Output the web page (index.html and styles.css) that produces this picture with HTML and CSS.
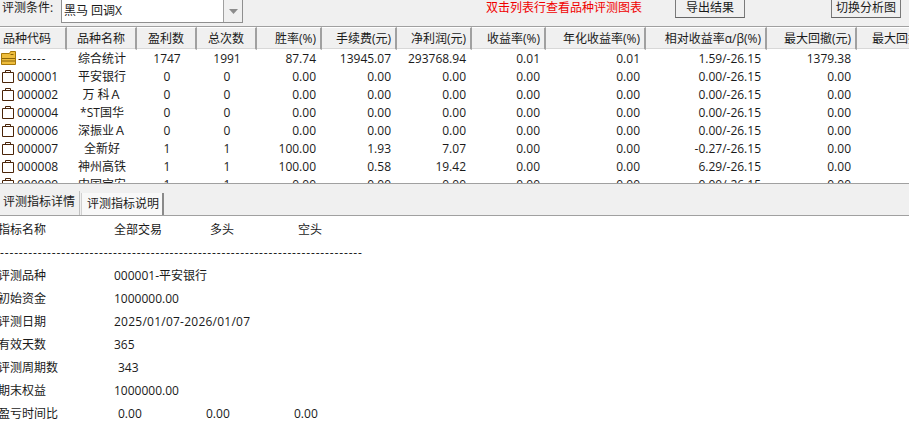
FILE: index.html
```html
<!DOCTYPE html>
<html lang="zh-CN">
<head>
<meta charset="utf-8">
<title>评测</title>
<link rel="stylesheet" href="styles.css">
</head>
<body>
<div class="app">
  <div class="toolbar">
    <span class="cond-label">评测条件:</span>
    <div class="combo"><span class="combo-text">黑马 回调X</span><span class="combo-btn"><svg width="9" height="5" viewBox="0 0 9 5"><path d="M0 0h9L4.500 5z" fill="#8c8c8c"/></svg></span></div>
    <span class="hint">双击列表行查看品种评测图表</span>
    <button class="btn btn-export">导出结果</button>
    <button class="btn btn-switch">切换分析图</button>
  </div>
  <div class="grid-wrap">
    <table class="grid">
      <colgroup>
        <col class="c1"><col class="c2"><col class="c3"><col class="c4"><col class="c5"><col class="c6"><col class="c7"><col class="c8"><col class="c9"><col class="c10"><col class="c11"><col class="c12">
      </colgroup>
      <thead>
        <tr>
          <th class="l">品种代码</th><th class="ctr">品种名称</th><th class="ctr">盈利数</th><th class="ctr">总次数</th><th>胜率(%)</th><th>手续费(元)</th><th>净利润(元)</th><th>收益率(%)</th><th>年化收益率(%)</th><th>相对收益率α/β(%)</th><th>最大回撤(元)</th><th class="last">最大回撤(%)</th>
        </tr>
      </thead>
      <tbody>
        <tr><td class="code"><svg class="ico" width="15" height="15" viewBox="0 0 15 15"><path d="M.5 2.500h8l1-2h5v13H.5z" fill="#eebd3c" stroke="#a87808"/><path d="M1 7.500h13M1 10h13M9.500 3.500h3" stroke="#8a6408" fill="none"/></svg><span class="dashes">------</span></td><td class="ctr">综合统计</td><td class="ctr">1747</td><td class="ctr">1991</td><td>87.74</td><td>13945.07</td><td>293768.94</td><td>0.01</td><td>0.01</td><td>1.59/-26.15</td><td>1379.38</td><td></td></tr>
        <tr><td class="code"><svg class="ico" width="15" height="15" viewBox="0 0 15 15"><path d="M1.500 3.500h11v10h-11zM4.500 3.500v-2h5v2" fill="none" stroke="#4a2408"/></svg>000001</td><td class="ctr">平安银行</td><td class="ctr">0</td><td class="ctr">0</td><td>0.00</td><td>0.00</td><td>0.00</td><td>0.00</td><td>0.00</td><td>0.00/-26.15</td><td>0.00</td><td></td></tr>
        <tr><td class="code"><svg class="ico" width="15" height="15" viewBox="0 0 15 15"><path d="M1.500 3.500h11v10h-11zM4.500 3.500v-2h5v2" fill="none" stroke="#4a2408"/></svg>000002</td><td class="ctr">万 科Ａ</td><td class="ctr">0</td><td class="ctr">0</td><td>0.00</td><td>0.00</td><td>0.00</td><td>0.00</td><td>0.00</td><td>0.00/-26.15</td><td>0.00</td><td></td></tr>
        <tr><td class="code"><svg class="ico" width="15" height="15" viewBox="0 0 15 15"><path d="M1.500 3.500h11v10h-11zM4.500 3.500v-2h5v2" fill="none" stroke="#4a2408"/></svg>000004</td><td class="ctr">*ST国华</td><td class="ctr">0</td><td class="ctr">0</td><td>0.00</td><td>0.00</td><td>0.00</td><td>0.00</td><td>0.00</td><td>0.00/-26.15</td><td>0.00</td><td></td></tr>
        <tr><td class="code"><svg class="ico" width="15" height="15" viewBox="0 0 15 15"><path d="M1.500 3.500h11v10h-11zM4.500 3.500v-2h5v2" fill="none" stroke="#4a2408"/></svg>000006</td><td class="ctr">深振业Ａ</td><td class="ctr">0</td><td class="ctr">0</td><td>0.00</td><td>0.00</td><td>0.00</td><td>0.00</td><td>0.00</td><td>0.00/-26.15</td><td>0.00</td><td></td></tr>
        <tr><td class="code"><svg class="ico" width="15" height="15" viewBox="0 0 15 15"><path d="M1.500 3.500h11v10h-11zM4.500 3.500v-2h5v2" fill="none" stroke="#4a2408"/></svg>000007</td><td class="ctr">全新好</td><td class="ctr">1</td><td class="ctr">1</td><td>100.00</td><td>1.93</td><td>7.07</td><td>0.00</td><td>0.00</td><td>-0.27/-26.15</td><td>0.00</td><td></td></tr>
        <tr><td class="code"><svg class="ico" width="15" height="15" viewBox="0 0 15 15"><path d="M1.500 3.500h11v10h-11zM4.500 3.500v-2h5v2" fill="none" stroke="#4a2408"/></svg>000008</td><td class="ctr">神州高铁</td><td class="ctr">1</td><td class="ctr">1</td><td>100.00</td><td>0.58</td><td>19.42</td><td>0.00</td><td>0.00</td><td>6.29/-26.15</td><td>0.00</td><td></td></tr>
        <tr><td class="code"><svg class="ico" width="15" height="15" viewBox="0 0 15 15"><path d="M1.500 3.500h11v10h-11zM4.500 3.500v-2h5v2" fill="none" stroke="#4a2408"/></svg>000009</td><td class="ctr">中国宝安</td><td class="ctr">1</td><td class="ctr">1</td><td>0.00</td><td>0.00</td><td>0.00</td><td>0.00</td><td>0.00</td><td>0.00/-26.15</td><td>0.00</td><td></td></tr>
      </tbody>
    </table>
  </div>
  <div class="tabs">
    <span class="tab tab-active">评测指标详情</span>
    <span class="tab">评测指标说明</span>
  </div>
  <div class="detail">
    <div class="line"><span class="k">指标名称</span><span class="v wide">全部交易</span><span class="v">多头</span><span class="v">空头</span></div>
    <div class="line dash">-----------------------------------------------------------------------------</div>
    <div class="line"><span class="k">评测品种</span><span class="v">000001-平安银行</span></div>
    <div class="line"><span class="k">初始资金</span><span class="v">1000000.00</span></div>
    <div class="line"><span class="k">评测日期</span><span class="v date">2025/01/07-2026/01/07</span></div>
    <div class="line"><span class="k">有效天数</span><span class="v">365</span></div>
    <div class="line"><span class="k">评测周期数</span><span class="v ind">343</span></div>
    <div class="line"><span class="k">期末权益</span><span class="v">1000000.00</span></div>
    <div class="line"><span class="k">盈亏时间比</span><span class="v ind">0.00</span><span class="v ind">0.00</span><span class="v ind">0.00</span></div>
  </div>
</div>
</body>
</html>
```
FILE: styles.css
```css
html, body {
  margin: 0;
  padding: 0;
  height: 100%;
  overflow: hidden;
  background: #fff;
}
.app {
  display: flex;
  flex-direction: column;
  height: 425px;
  overflow: hidden;
  font: 12px/18px "Open Sans", "Noto Sans CJK SC", sans-serif;
  color: #1a1a1a;
}
.toolbar {
  height: 26px;
  flex: none;
  background: #f0f0f0;
  display: flex;
  align-items: flex-start;
  border-bottom: 1px solid #a0a0a0;
}
.cond-label { margin-left: 2px; width: 59px; line-height: 16px; }
.combo {
  width: 182px;
  height: 23px;
  box-sizing: border-box;
  background: #fff;
  border: 1px solid #8f8f8f;
  border-top: 0;
  display: flex;
}
.combo-text { flex: 1; padding: 1px 0 0 2px; line-height: 20px; }
.combo-btn {
  width: 18px;
  border-left: 1px solid #a0a0a0;
  display: flex;
  align-items: center;
  justify-content: center;
  background: #f0f0f0;
}
.hint { margin-left: 243px; width: 189px; color: #f00000; line-height: 16px; }
.btn {
  width: 70px;
  height: 18px;
  padding: 0 0 2px;
  font: inherit;
  line-height: 15px;
  color: #1a1a1a;
  background: #f0f0f0;
  border: 1px solid #7a7a7a;
  border-top: 0;
  border-bottom-color: #666;
}
.btn-switch { margin-left: 86px; }
.grid-wrap {
  height: 156px;
  flex: none;
  overflow: hidden;
  background: #fff;
  border-bottom: 1px solid #a0a0a0;
}
.grid {
  table-layout: fixed;
  border-collapse: separate;
  border-spacing: 0;
  width: 957px;
}
.c1 { width: 67px; } .c2 { width: 70px; } .c3 { width: 60px; } .c4 { width: 60px; }
.c5 { width: 65px; } .c6 { width: 75px; } .c7 { width: 75px; } .c8 { width: 74px; }
.c9 { width: 100px; } .c10 { width: 121px; } .c11 { width: 90px; } .c12 { width: 100px; }
.grid th {
  height: 23px;
  padding: 0 4px 0 0;
  box-sizing: border-box;
  font-weight: 400;
  text-align: right;
  white-space: nowrap;
  overflow: hidden;
  background: #f0f0f0;
  background-clip: padding-box;
  border-top: 1px solid #fff;
  border-right: 2px solid #a0a0a0;
  border-bottom: 1px solid #fff;
  box-shadow: inset 0 -1px #d8d8d8;
}
.grid th.l { text-align: left; padding: 0 0 0 3px; }
.grid th.ctr { text-align: center; padding: 0; }
.grid th.last { text-align: left; padding: 0 0 0 15px; border-right: 0; }
.grid td {
  height: 18px;
  padding: 0 6px 0 0;
  text-align: right;
  white-space: nowrap;
  overflow: hidden;
}
.grid td.ctr { text-align: center; padding: 0; }
.grid td.code { text-align: left; padding: 0 0 0 2px; }
.ico { vertical-align: -3px; margin: 0 1px 0 -1px; }
.dashes { letter-spacing: .85px; margin-left: 1px; }
.tabs {
  height: 31px;
  flex: none;
  display: flex;
  align-items: flex-end;
  background: #f0f0f0;
  border-bottom: 1px solid #a0a0a0;
}
.tab {
  height: 22px;
  box-sizing: border-box;
  margin-left: 1px;
  padding: 1px 3px 0 5px;
  line-height: 20px;
  background: #f8f8f8;
  border-right: 2px solid #8a8a8a;
  border-left: 1px solid #d0d0d0;
}
.tab-active {
  height: 24px;
  margin-left: 0;
  padding: 0 4px 0 3px;
  line-height: 22px;
  background: #f0f0f0;
  border-left: 0;
  border-right: 1px solid #c0c0c0;
}
.detail {
  flex: 1;
  padding-top: 2px;
  overflow: hidden;
  background: #fff;
}
.line {
  height: 23px;
  line-height: 23px;
  display: flex;
  white-space: nowrap;
}
.k { width: 116px; margin-left: -2px; flex: none; }
.v { width: 88px; flex: none; }
.wide { width: 96px; }
.ind { text-indent: 4px; }
.dash { letter-spacing: .85px; }
.date { letter-spacing: .24px; }
```
